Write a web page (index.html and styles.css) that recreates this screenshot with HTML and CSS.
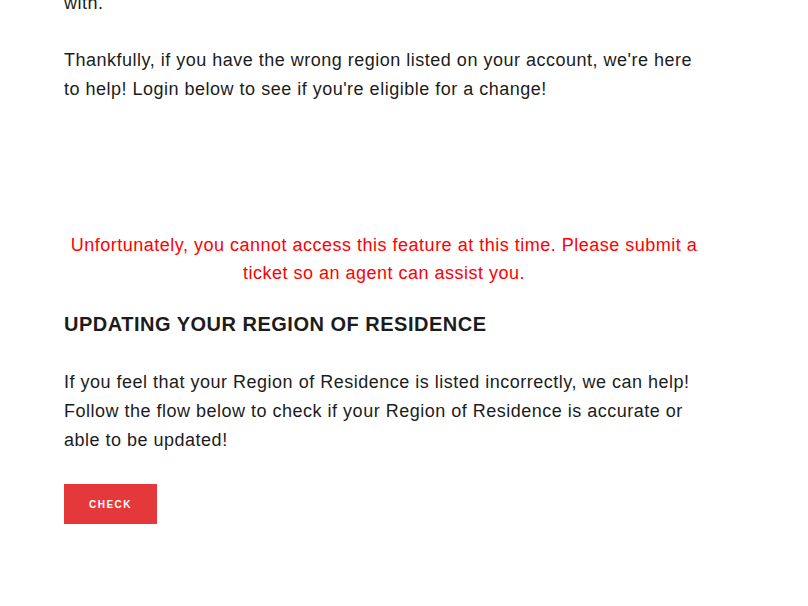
FILE: index.html
```html
<!DOCTYPE html>
<html lang="en">
<head>
<meta charset="utf-8">
<title>Region of Residence</title>
<link rel="stylesheet" href="styles.css">
</head>
<body>
<main class="content">
  <p class="text intro">with.</p>
  <p class="text">Thankfully, if you have the wrong region listed on your account, we're here to help! Login below to see if you're eligible for a change!</p>
  <p class="notice">Unfortunately, you cannot access this feature at this time. Please submit a ticket so an agent can assist you.</p>
  <h2 class="heading">UPDATING YOUR REGION OF RESIDENCE</h2>
  <p class="text">If you feel that your Region of Residence is listed incorrectly, we can help! Follow the flow below to check if your Region of Residence is accurate or able to be updated!</p>
  <button class="btn" type="button">CHECK</button>
</main>
</body>
</html>
```
FILE: styles.css
```css
html, body {
  margin: 0;
  padding: 0;
  background: #ffffff;
}
body {
  font-family: "Liberation Sans", Arial, sans-serif;
  color: #1c1c1c;
}
.content {
  width: 640px;
  margin: -11px 0 0 64px;
}
.text {
  font-size: 18px;
  line-height: 29px;
  letter-spacing: 0.5px;
  margin: 0 0 28px;
}
.intro {
  margin-bottom: 28px;
}
.notice {
  margin: 127px 0 0;
  color: #ff0000;
  text-align: center;
  font-size: 18px;
  line-height: 28px;
  letter-spacing: 0.5px;
}
.heading {
  margin: 23px 0 0;
  font-size: 20px;
  line-height: 28px;
  font-weight: 700;
  color: #1c1c1c;
  letter-spacing: 0.5px;
}
.heading + .text {
  margin-top: 30px;
  margin-bottom: 29px;
}
.btn {
  display: block;
  width: 93px;
  height: 40px;
  border: 0;
  padding: 0;
  background: #e5383b;
  color: #ffffff;
  font-family: "Liberation Sans", Arial, sans-serif;
  font-size: 10px;
  font-weight: 700;
  letter-spacing: 1.5px;
  cursor: pointer;
}
```
